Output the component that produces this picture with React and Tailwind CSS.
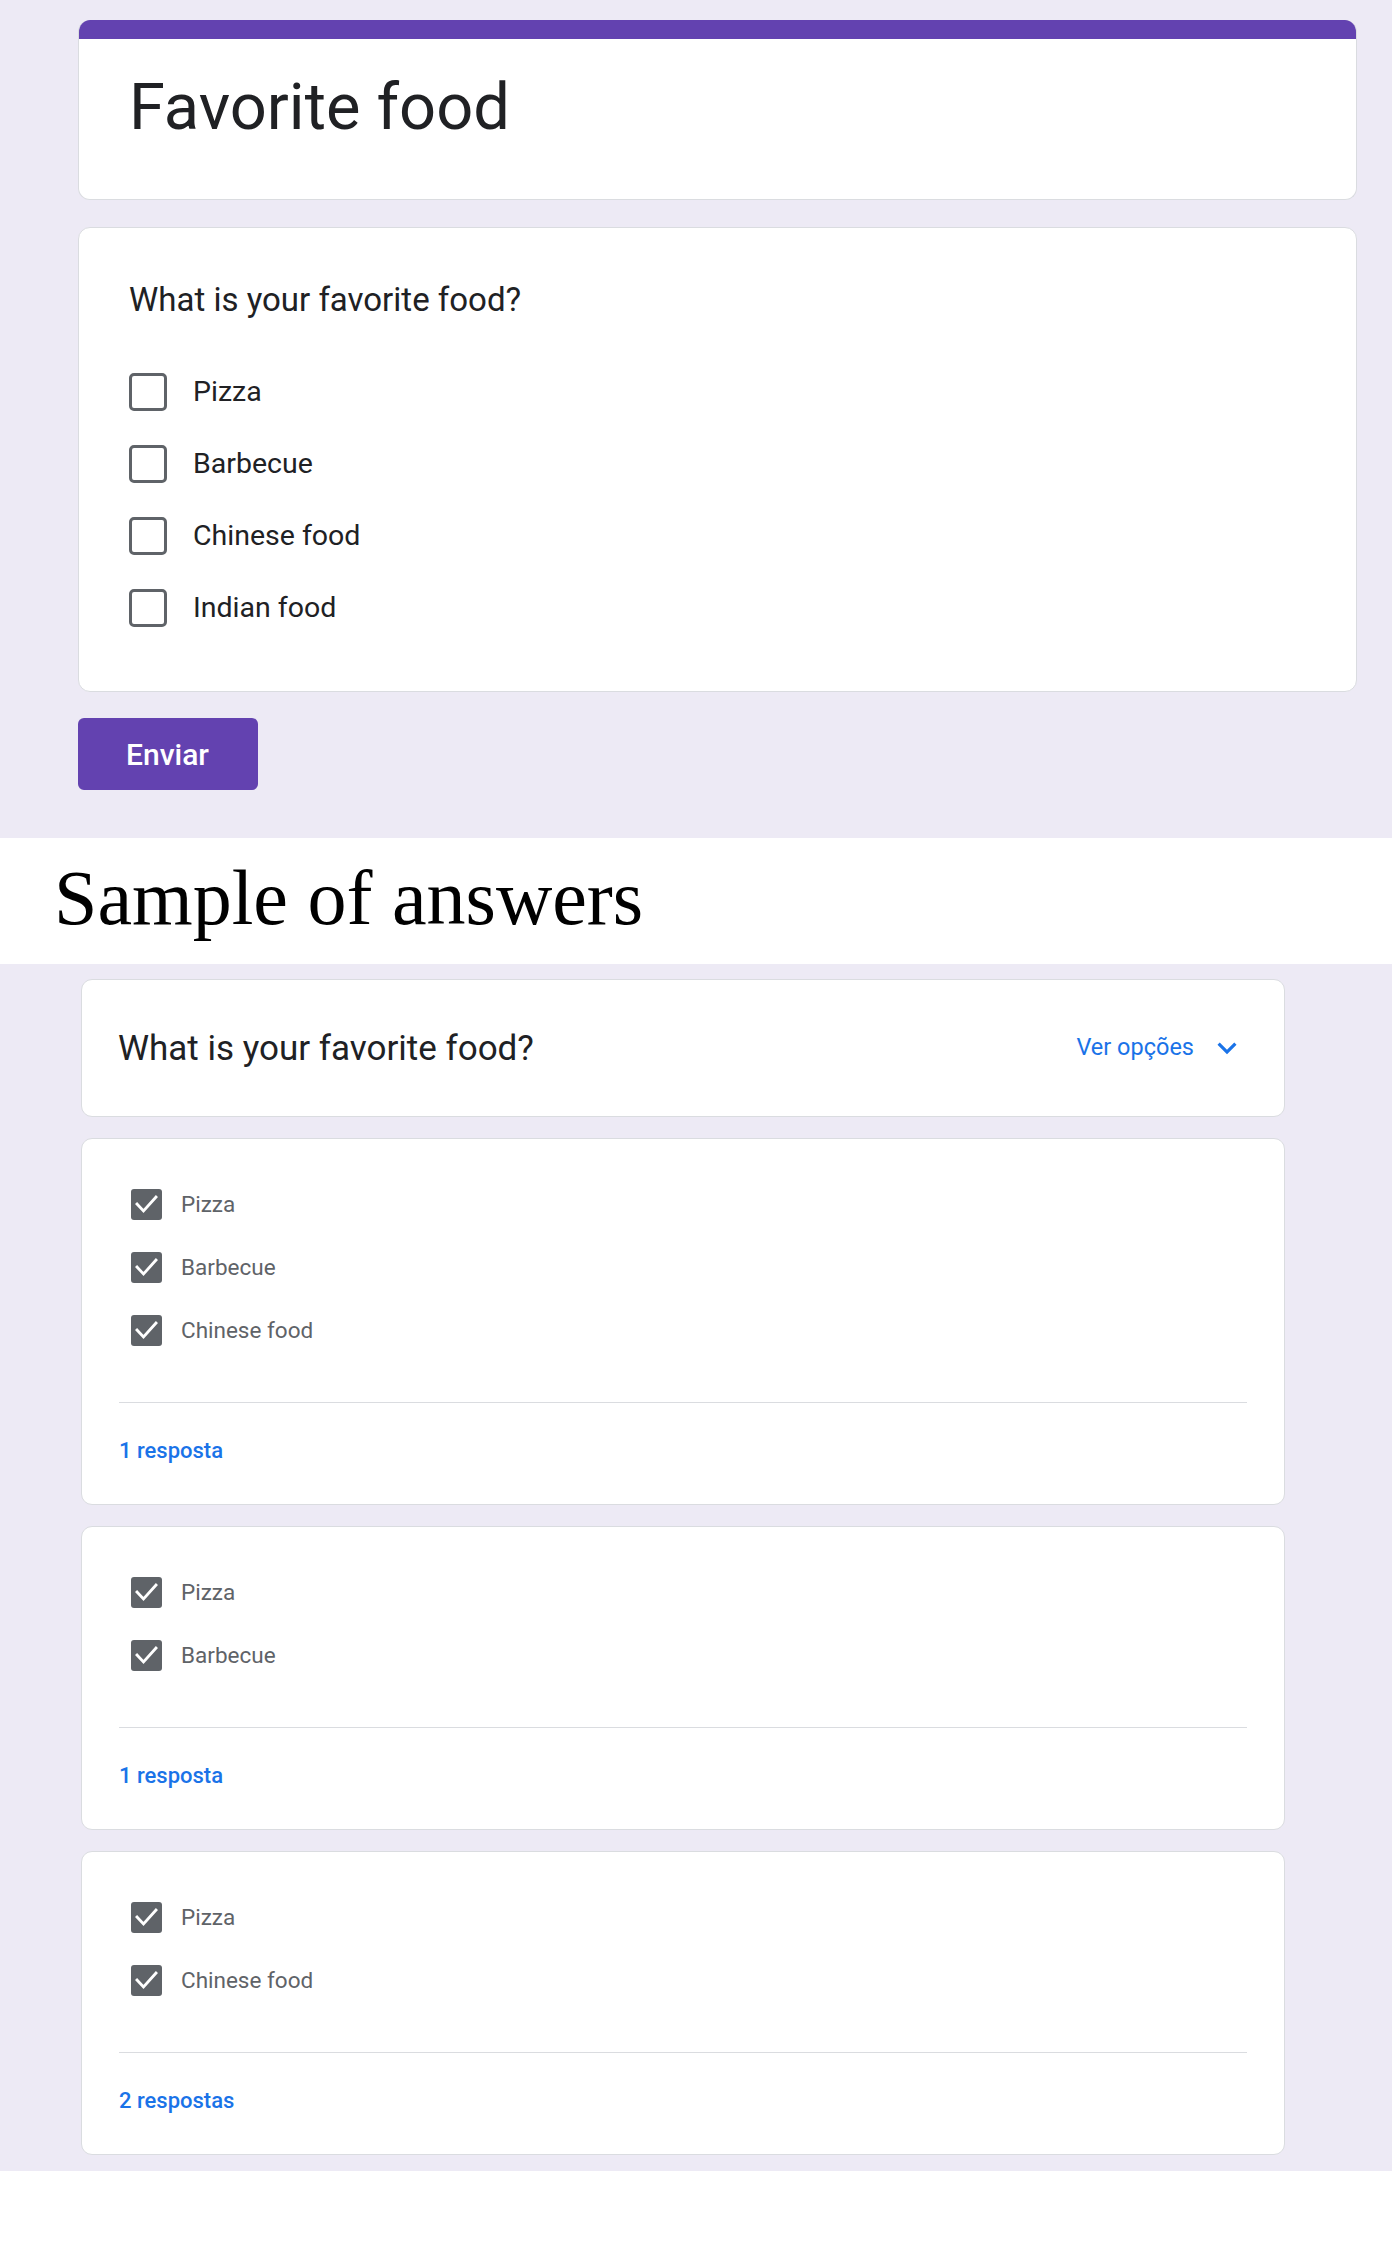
import React from "react";

function EmptyBox() {
  return <div className="w-[38px] h-[38px] shrink-0 rounded-[5px] border-[3px] border-[#5f6368] bg-white" />;
}

function CheckedBox() {
  return (
    <div className="w-[31px] h-[31px] shrink-0 rounded-[3px] bg-[#5f6368] flex items-center justify-center">
      <svg width="31" height="31" viewBox="0 0 31 31">
        <polyline points="6,15 12.5,22 25,8" fill="none" stroke="#ffffff" strokeWidth="2.8" strokeLinecap="square" />
      </svg>
    </div>
  );
}

function AnswerCard({ options, count }) {
  return (
    <div className="bg-white rounded-[11px] border border-[#dadce0] px-[37px] pt-[34px]">
      <div className="flex flex-col pl-[12px]">
        {options.map((o) => (
          <div key={o} className="h-[63px] flex items-center gap-[19px]">
            <CheckedBox />
            <span className="text-[22.5px] text-[#5f6368] leading-none">{o}</span>
          </div>
        ))}
      </div>
      <div className="mt-[40px] h-px bg-[#dadce0]" />
      <div className="pt-[36px] pb-[41px] text-[22px] leading-[24px] font-medium text-[#1a73e8]">{count}</div>
    </div>
  );
}

export default function App() {
  const opts = ["Pizza", "Barbecue", "Chinese food", "Indian food"];
  return (
    <div className="w-[1392px] min-h-[2268px] bg-white font-[Roboto,sans-serif] text-[#202124]">
      <section className="bg-[#edeaf5] pt-[20px] pb-[48px] pl-[78px] pr-[35px]">
        <div className="h-[180px] bg-white rounded-[12px] overflow-hidden border border-t-0 border-[#dadce0]">
          <div className="h-[19px] bg-[#6342b0]" />
          <div className="pt-[36px] pl-[50px] text-[65px] leading-none">Favorite food</div>
        </div>
        <div className="mt-[27px] bg-white rounded-[12px] border border-[#dadce0] pl-[50px] pt-[55px] pb-[47px]">
          <div className="text-[33px] leading-none">What is your favorite food?</div>
          <div className="mt-[40px] flex flex-col">
            {opts.map((o) => (
              <div key={o} className="h-[72px] flex items-center gap-[26px]">
                <EmptyBox />
                <span className="text-[28.5px] leading-none">{o}</span>
              </div>
            ))}
          </div>
        </div>
        <button className="mt-[26px] w-[180px] h-[72px] rounded-[6px] bg-[#6342b0] text-white text-[30px] font-medium flex items-center pl-[48px]">
          Enviar
        </button>
      </section>
      <section className="h-[126px] bg-white pt-[21px] pl-[54px]">
        <h1 className="font-['Liberation_Serif',serif] text-[78px] leading-none text-black">Sample of answers</h1>
      </section>
      <section className="bg-[#edeaf5] pt-[15px] pb-[16px] pl-[81px] pr-[107px] flex flex-col gap-[21px]">
        <div className="h-[138px] bg-white rounded-[11px] border border-[#dadce0] pl-[36px] pr-[38px] flex items-center">
          <div className="flex-1 text-[35px] leading-none">What is your favorite food?</div>
          <span className="text-[23.5px] text-[#1a73e8] leading-none">Ver opções</span>
          <svg className="ml-[14px]" width="38" height="38" viewBox="0 0 24 24">
            <path d="M16.59 8.59L12 13.17 7.41 8.59 6 10l6 6 6-6z" fill="#1a73e8" />
          </svg>
        </div>
        <AnswerCard options={["Pizza", "Barbecue", "Chinese food"]} count="1 resposta" />
        <AnswerCard options={["Pizza", "Barbecue"]} count="1 resposta" />
        <AnswerCard options={["Pizza", "Chinese food"]} count="2 respostas" />
      </section>
    </div>
  );
}
